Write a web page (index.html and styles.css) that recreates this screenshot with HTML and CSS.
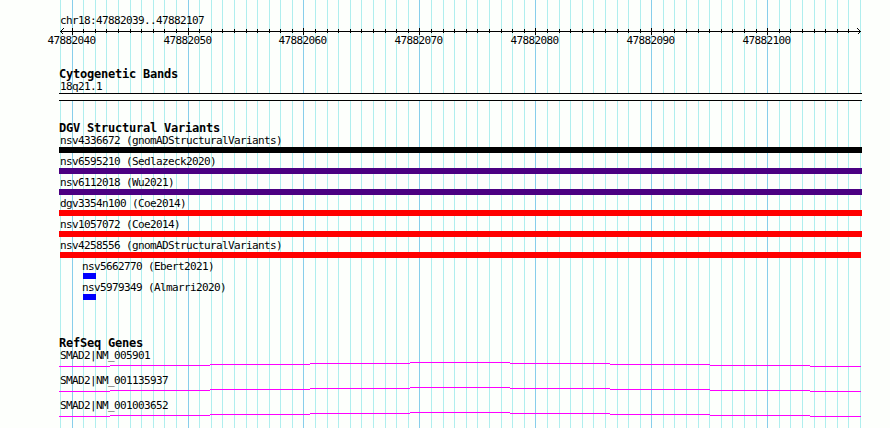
FILE: index.html
```html
<!DOCTYPE html>
<html lang="en">
<head>
    <meta charset="UTF-8">
    <title>chr18:47882039..47882107</title>
    <link rel="stylesheet" href="styles.css">
</head>
<body>

<div class="browser">
    <svg class="grid" width="890" height="428">
        <path id="minorGrid" class="minor"/>
        <path id="majorGrid" class="major"/>
    </svg>

    <div class="ruler">
        <div class="label">chr18:47882039..47882107</div>
        <svg class="axis" width="890" height="20">
            <path id="ticks" d="M60 4.5H861M63.5 1.5L60.5 4.5L63.5 7.5M857.5 1.5L860.5 4.5L857.5 7.5"/>
        </svg>
    </div>

    <div class="track cyto">
        <h3>Cytogenetic Bands</h3>
        <div class="label">18q21.1</div>
        <div class="band"></div>
    </div>

    <div class="track variants">
        <h3>DGV Structural Variants</h3>
        <div class="variant"><div class="label">nsv4336672 (gnomADStructuralVariants)</div><div class="bar black"></div></div>
        <div class="variant"><div class="label">nsv6595210 (Sedlazeck2020)</div><div class="bar indigo"></div></div>
        <div class="variant"><div class="label">nsv6112018 (Wu2021)</div><div class="bar indigo"></div></div>
        <div class="variant"><div class="label">dgv3354n100 (Coe2014)</div><div class="bar red"></div></div>
        <div class="variant"><div class="label">nsv1057072 (Coe2014)</div><div class="bar red"></div></div>
        <div class="variant"><div class="label">nsv4258556 (gnomADStructuralVariants)</div><div class="bar red inner"></div></div>
        <div class="variant small"><div class="label">nsv5662770 (Ebert2021)</div><div class="bar blue"></div></div>
        <div class="variant small"><div class="label">nsv5979349 (Almarri2020)</div><div class="bar blue"></div></div>
    </div>

    <div class="track genes">
        <h3>RefSeq Genes</h3>
        <div class="gene">
            <div class="label">SMAD2|NM_005901</div>
            <svg class="intron" width="803" height="5"><path d="M0 4.5H51M51 3.5H151M151 2.5H251M251 1.5H351M351 .5H451M451 1.5H551M551 2.5H651M651 3.5H751M751 4.5H802"/></svg>
        </div>
        <div class="gene">
            <div class="label">SMAD2|NM_001135937</div>
            <svg class="intron" width="803" height="5"><path d="M0 4.5H51M51 3.5H151M151 2.5H251M251 1.5H351M351 .5H451M451 1.5H551M551 2.5H651M651 3.5H751M751 4.5H802"/></svg>
        </div>
        <div class="gene">
            <div class="label">SMAD2|NM_001003652</div>
            <svg class="intron" width="803" height="5"><path d="M0 4.5H51M51 3.5H151M151 2.5H251M251 1.5H351M351 .5H451M451 1.5H551M551 2.5H651M651 3.5H751M751 4.5H802"/></svg>
        </div>
    </div>
</div>

<script>
    const start = 47882039;
    const bases = 69;
    const axis = document.querySelector('.axis');
    let minor = '';
    let major = '';
    let ticks = '';

    for (let i = 0; i <= bases; i++) {
        const x = 60 + Math.round(i * 800 / bases);
        const pos = start + i;
        if (pos % 10 === 0 && i < bases) {
            major += `M${x + 0.5} 0V428`;
            ticks += `M${x + 0.5} 1V8`;
            const text = document.createElementNS('http://www.w3.org/2000/svg', 'text');
            text.setAttribute('x', x - 24.5);
            text.setAttribute('y', 17);
            text.textContent = pos;
            axis.appendChild(text);
        } else {
            minor += `M${x + 0.5} 0V428`;
            if (i > 0 && i < bases) ticks += `M${x + 0.5} 2V6`;
        }
    }

    document.getElementById('minorGrid').setAttribute('d', minor);
    document.getElementById('majorGrid').setAttribute('d', major);
    const tickPath = document.getElementById('ticks');
    tickPath.setAttribute('d', tickPath.getAttribute('d') + ticks);
</script>

</body>
</html>
```
FILE: styles.css
```css
body {
    margin: 0;
    background: #fdfffc;
    color: #000;
    font-family: "DejaVu Sans Mono", monospace;
    overflow: hidden;
}
.browser {
    position: relative;
    width: 890px;
    height: 428px;
    overflow: hidden;
}
svg {
    display: block;
    fill: none;
    shape-rendering: crispEdges;
}
.grid {
    position: absolute;
    top: 0;
    left: 0;
    z-index: -1;
}
.minor { stroke: #afeeee; }
.major { stroke: #87ceeb; }
.ruler {
    height: 53px;
    padding-top: 15px;
}
.label, .axis text {
    font-size: 11px;
    letter-spacing: -0.622px;
    white-space: pre;
}
.label {
    height: 12px;
    line-height: 12px;
    padding-left: 1px;
}
.ruler .label { padding-left: 60px; }
.axis path { stroke: #000; }
.axis text { fill: #000; }
.track {
    width: 803px;
    margin-left: 59px;
}
h3 {
    height: 13px;
    margin: 0;
    font-size: 12px;
    line-height: 13px;
    letter-spacing: -0.224px;
}
.cyto { height: 54px; }
.band {
    height: 6px;
    border-top: 1px solid #000;
    border-bottom: 1px solid #000;
    background: #fdfffc;
}
.variants { height: 215px; }
.variant { height: 21px; }
.bar { height: 6px; }
.black { background: #000; }
.indigo { background: #4b0082; }
.red { background: #f00; }
.blue { background: #00f; }
.inner { margin: 0 1px; }
.small { margin-left: 23px; }
.small .label { padding-left: 0; }
.small .bar {
    width: 13px;
    margin-left: 1px;
}
.gene { height: 25px; }
.intron path { stroke: #f0f; }
```
